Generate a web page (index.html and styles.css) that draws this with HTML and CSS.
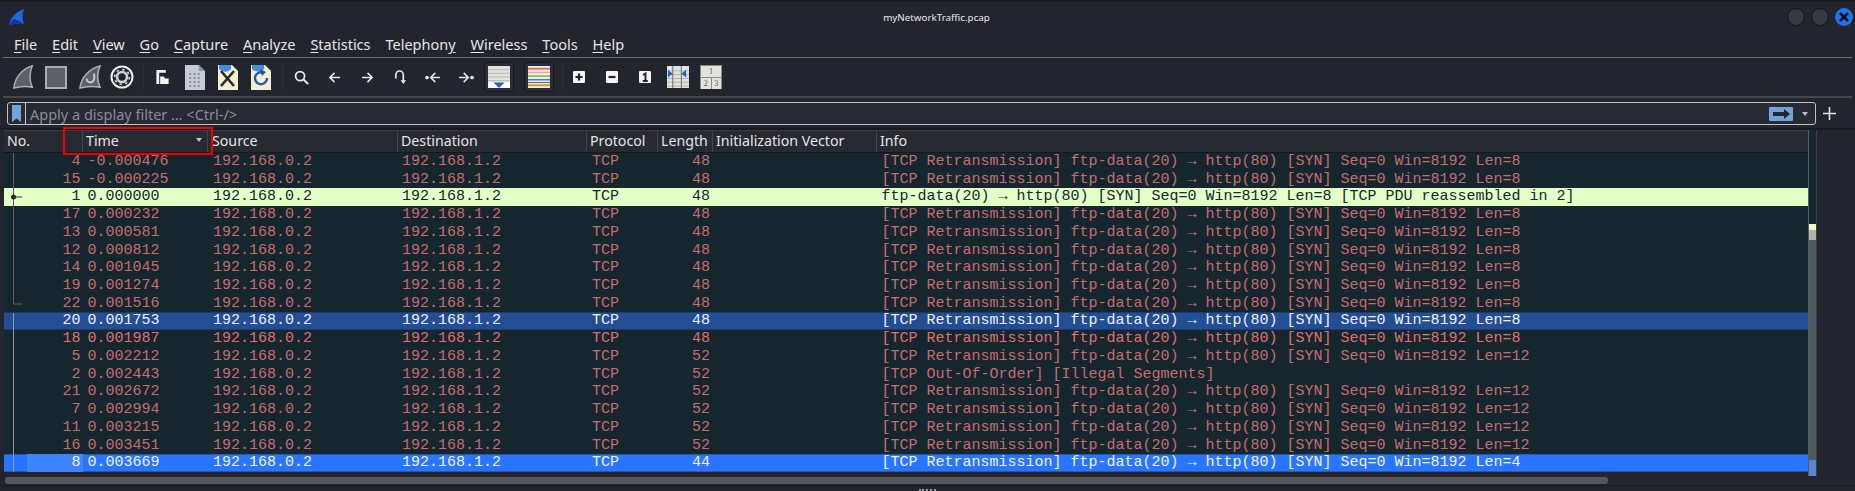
FILE: index.html
```html
<!DOCTYPE html>
<html lang="en">
<head>
    <meta charset="UTF-8">
    <meta name="viewport" content="width=device-width, initial-scale=1.0">
    <title>myNetworkTraffic.pcap</title>
    <link rel="stylesheet" href="styles.css">
</head>
<body>
    <div class="titlebar">
        <svg class="logo" width="16" height="16" viewBox="0 0 16 16"><path d="M0 16C1 9 7 3 15 0c-2 5-2 10 0 15-5-1-10 0-15 1z" fill="#1f66e0"/><path d="M0 16c1-3 3-5 5-6 4 1 7 3 10 5-5-1-10 0-15 1z" fill="#0e3c9c"/></svg>
        <div class="title">myNetworkTraffic.pcap</div>
        <div class="winbtns">
            <span class="winbtn"></span>
            <span class="winbtn"></span>
            <span class="winclose"><svg width="18" height="18" viewBox="0 0 18 18"><path d="M5 5l8 8M13 5l-8 8" stroke="#0b1220" stroke-width="2.6" fill="none"/></svg></span>
        </div>
    </div>

    <div class="menubar">
        <span><u>F</u>ile</span>
        <span><u>E</u>dit</span>
        <span><u>V</u>iew</span>
        <span><u>G</u>o</span>
        <span><u>C</u>apture</span>
        <span><u>A</u>nalyze</span>
        <span><u>S</u>tatistics</span>
        <span>Telephon<u>y</u></span>
        <span><u>W</u>ireless</span>
        <span><u>T</u>ools</span>
        <span><u>H</u>elp</span>
    </div>

    <div class="toolbar">
        <svg class="i-fin" width="22" height="25" viewBox="0 0 24 26" preserveAspectRatio="none"><path d="M2 24C3 13 11 4 22 1c-3 7-3 15 0 22-7-1-13-1-20 1z" fill="#5c6068" stroke="#a9adb4" stroke-width="1.6"/></svg>
        <svg class="i-stop" width="22" height="23" viewBox="0 0 22 23"><rect x="1" y="1" width="20" height="21" fill="#5c6068" stroke="#a9adb4" stroke-width="2"/></svg>
        <svg class="i-restart" width="24" height="25" viewBox="0 0 24 26" preserveAspectRatio="none"><path d="M2 24C3 13 11 4 22 1c-3 7-3 15 0 22-7-1-13-1-20 1z" fill="#5c6068" stroke="#a9adb4" stroke-width="1.6"/><path d="M16 9c1 5 0 9-4 9-2 0-4-2-3-4" fill="none" stroke="#c4c7cc" stroke-width="2"/></svg>
        <svg class="i-gear" width="24" height="24" viewBox="0 0 24 24"><circle cx="12" cy="12" r="10.5" fill="none" stroke="#eceded" stroke-width="2"/><circle cx="12" cy="12" r="5" fill="none" stroke="#cfd0d2" stroke-width="2.6"/><circle cx="12" cy="12" r="7.4" fill="none" stroke="#cfd0d2" stroke-width="1.6" stroke-dasharray="2.5 3.3"/></svg>
        <span class="sep s-a"></span>
        <svg class="i-open" width="15" height="16" viewBox="0 0 15 17"><path d="M1 1h10v3H4v12H1z" fill="#f4f4f4"/><path d="M5 8h4l1 2h4v6H5z" fill="#f4f4f4"/></svg>
        <svg class="i-doc" width="20" height="25" viewBox="0 0 19 25" preserveAspectRatio="none"><path d="M0 0h13l6 6v19H0z" fill="#c6ccd6"/><path d="M13 0l6 6h-6z" fill="#8f96a3"/><path d="M4 9h2M8 9h2M12 9h2M4 13h2M8 13h2M12 13h2M4 17h2M8 17h2M12 17h2M4 21h2M8 21h2M12 21h2" stroke="#8f96a3" stroke-width="2"/></svg>
        <svg class="i-close" width="20" height="25" viewBox="0 0 20 25"><path d="M0 0h14l6 6v19H0z" fill="#f3efd0"/><path d="M1 0h12v4c-3 4-9 3-12 0z" fill="#3f8ee0"/><path d="M3 6l13 15M16 6L3 21" stroke="#2a2a2a" stroke-width="2.6"/></svg>
        <svg class="i-reload" width="20" height="25" viewBox="0 0 20 25"><path d="M0 0h14l6 6v19H0z" fill="#f3efd0"/><path d="M1 0h12v4c-3 4-9 3-12 0z" fill="#3f8ee0"/><path d="M13 8a6 6 0 1 0 3 5" fill="none" stroke="#2258a8" stroke-width="2.4"/><path d="M9 4l6 3-4 4z" fill="#2258a8"/></svg>
        <span class="sep s-b"></span>
        <svg class="i-find" width="15" height="15" viewBox="0 0 16 16"><circle cx="6.5" cy="6.5" r="4.8" fill="none" stroke="#e8e8e8" stroke-width="1.9"/><path d="M10 10l5 5" stroke="#e8e8e8" stroke-width="2.2"/></svg>
        <svg class="i-back" width="13" height="13" viewBox="0 0 14 14"><path d="M13 7H2M7 2L2 7l5 5" fill="none" stroke="#e8e8e8" stroke-width="1.7"/></svg>
        <svg class="i-fwd" width="13" height="13" viewBox="0 0 14 14"><path d="M1 7h11M7 2l5 5-5 5" fill="none" stroke="#e8e8e8" stroke-width="1.7"/></svg>
        <svg class="i-goto" width="13" height="15" viewBox="0 0 14 16"><path d="M2 9V5a4 4 0 0 1 8 0v7" fill="none" stroke="#e8e8e8" stroke-width="1.8"/><path d="M7 11h6l-3 4z" fill="#e8e8e8"/></svg>
        <svg class="i-first" width="16" height="13" viewBox="0 0 17 14"><circle cx="2" cy="7" r="2" fill="#e8e8e8"/><path d="M16 7H6M11 2L6 7l5 5" fill="none" stroke="#e8e8e8" stroke-width="1.7"/></svg>
        <svg class="i-last" width="16" height="13" viewBox="0 0 17 14"><circle cx="15" cy="7" r="2" fill="#e8e8e8"/><path d="M1 7h10M6 2l5 5-5 5" fill="none" stroke="#e8e8e8" stroke-width="1.7"/></svg>
        <span class="toggle i-scroll">
            <svg width="22" height="22" viewBox="0 0 24 24"><rect width="24" height="24" fill="#e3e3de"/><path d="M0 4h24M0 8h24M0 12h24M0 16h24" stroke="#b5b5b0" stroke-width="1"/><path d="M0 21h24" stroke="#fff" stroke-width="6"/><path d="M6 18h12l-6 6z" fill="#2b5fa8"/></svg>
        </span>
        <span class="toggle i-color">
            <svg width="22" height="22" viewBox="0 0 24 24"><rect width="24" height="24" fill="#ecece8"/><path d="M0 3h24" stroke="#e8686a" stroke-width="2"/><path d="M0 7h24" stroke="#e8a0a0" stroke-width="1.5"/><path d="M0 11h24" stroke="#8cc850" stroke-width="2"/><path d="M0 15h24" stroke="#3f6fc0" stroke-width="1.5"/><path d="M0 18h24" stroke="#6a4a90" stroke-width="1"/><path d="M0 21h24" stroke="#d09a10" stroke-width="2"/></svg>
        </span>
        <span class="sep s-c"></span>
        <span class="zoombtn i-zin"><svg width="12" height="12" viewBox="0 0 12 12"><path d="M2.5 6h7M6 2.5v7" stroke="#22242c" stroke-width="2.2"/></svg></span>
        <span class="zoombtn i-zout"><svg width="12" height="12" viewBox="0 0 12 12"><path d="M2.5 6h7" stroke="#22242c" stroke-width="2.2"/></svg></span>
        <span class="zoombtn i-z1"><svg width="12" height="12" viewBox="0 0 12 12"><path d="M4 4l2.500-1.500V10M3.800 10h5" fill="none" stroke="#22242c" stroke-width="1.9"/></svg></span>
        <svg class="i-resize" width="22" height="22" viewBox="0 0 23 23"><rect width="23" height="23" fill="#e3e3de"/><path d="M0 5h23M0 9h23M0 13h23M0 17h23M0 21h23" stroke="#b5b5b0"/><path d="M6 0v23M15 0v23" stroke="#7d7d7d" stroke-width="1.2"/><path d="M1 4l5 4-5 4zM20 4l-5 4 5 4z" fill="#2b66b8"/></svg>
        <span class="i-panes">
            <span class="pane top">1</span>
            <span class="pane">2</span>
            <span class="pane">3</span>
        </span>
    </div>

    <div class="filterrow">
        <div class="filter">
            <span class="bookmark"><svg width="9" height="17" viewBox="0 0 9 17"><path d="M0 0h9v17L4.500 13.500 0 17z" fill="#6fa4dc"/></svg></span>
            <span class="placeholder">Apply a display filter … &lt;Ctrl-/&gt;</span>
            <span class="apply"><svg width="18" height="10" viewBox="0 0 18 10"><path d="M0 3h11V0l6 5-6 5V7H0z" fill="#23252e"/></svg></span>
            <span class="drop"></span>
        </div>
        <svg class="plus" width="13" height="13" viewBox="0 0 13 13"><path d="M6.500 0v13M0 6.500h13" stroke="#e4e4e4" stroke-width="1.6"/></svg>
    </div>

    <div class="listwrap">
        <div class="list">
            <div class="head">
                <div class="hc c-no">No.</div>
                <div class="hc c-time">Time<span class="sort"></span><span class="redbox"></span></div>
                <div class="hc c-src">Source</div>
                <div class="hc c-dst">Destination</div>
                <div class="hc c-proto">Protocol</div>
                <div class="hc c-len">Length</div>
                <div class="hc c-iv">Initialization Vector</div>
                <div class="hc c-info">Info</div>
            </div>
            <div class="rows">
                <div class="row"><span class="c-no">4</span><span class="c-time">-0.000476</span><span class="c-src">192.168.0.2</span><span class="c-dst">192.168.1.2</span><span class="c-proto">TCP</span><span class="c-len">48</span><span class="c-iv"></span><span class="c-info">[TCP Retransmission] ftp-data(20) → http(80) [SYN] Seq=0 Win=8192 Len=8</span></div>
                <div class="row"><span class="c-no">15</span><span class="c-time">-0.000225</span><span class="c-src">192.168.0.2</span><span class="c-dst">192.168.1.2</span><span class="c-proto">TCP</span><span class="c-len">48</span><span class="c-iv"></span><span class="c-info">[TCP Retransmission] ftp-data(20) → http(80) [SYN] Seq=0 Win=8192 Len=8</span></div>
                <div class="row first"><span class="c-no">1</span><span class="c-time">0.000000</span><span class="c-src">192.168.0.2</span><span class="c-dst">192.168.1.2</span><span class="c-proto">TCP</span><span class="c-len">48</span><span class="c-iv"></span><span class="c-info">ftp-data(20) → http(80) [SYN] Seq=0 Win=8192 Len=8 [TCP PDU reassembled in 2]</span></div>
                <div class="row"><span class="c-no">17</span><span class="c-time">0.000232</span><span class="c-src">192.168.0.2</span><span class="c-dst">192.168.1.2</span><span class="c-proto">TCP</span><span class="c-len">48</span><span class="c-iv"></span><span class="c-info">[TCP Retransmission] ftp-data(20) → http(80) [SYN] Seq=0 Win=8192 Len=8</span></div>
                <div class="row"><span class="c-no">13</span><span class="c-time">0.000581</span><span class="c-src">192.168.0.2</span><span class="c-dst">192.168.1.2</span><span class="c-proto">TCP</span><span class="c-len">48</span><span class="c-iv"></span><span class="c-info">[TCP Retransmission] ftp-data(20) → http(80) [SYN] Seq=0 Win=8192 Len=8</span></div>
                <div class="row"><span class="c-no">12</span><span class="c-time">0.000812</span><span class="c-src">192.168.0.2</span><span class="c-dst">192.168.1.2</span><span class="c-proto">TCP</span><span class="c-len">48</span><span class="c-iv"></span><span class="c-info">[TCP Retransmission] ftp-data(20) → http(80) [SYN] Seq=0 Win=8192 Len=8</span></div>
                <div class="row"><span class="c-no">14</span><span class="c-time">0.001045</span><span class="c-src">192.168.0.2</span><span class="c-dst">192.168.1.2</span><span class="c-proto">TCP</span><span class="c-len">48</span><span class="c-iv"></span><span class="c-info">[TCP Retransmission] ftp-data(20) → http(80) [SYN] Seq=0 Win=8192 Len=8</span></div>
                <div class="row"><span class="c-no">19</span><span class="c-time">0.001274</span><span class="c-src">192.168.0.2</span><span class="c-dst">192.168.1.2</span><span class="c-proto">TCP</span><span class="c-len">48</span><span class="c-iv"></span><span class="c-info">[TCP Retransmission] ftp-data(20) → http(80) [SYN] Seq=0 Win=8192 Len=8</span></div>
                <div class="row"><span class="c-no">22</span><span class="c-time">0.001516</span><span class="c-src">192.168.0.2</span><span class="c-dst">192.168.1.2</span><span class="c-proto">TCP</span><span class="c-len">48</span><span class="c-iv"></span><span class="c-info">[TCP Retransmission] ftp-data(20) → http(80) [SYN] Seq=0 Win=8192 Len=8</span></div>
                <div class="row sel-dim"><span class="c-no">20</span><span class="c-time">0.001753</span><span class="c-src">192.168.0.2</span><span class="c-dst">192.168.1.2</span><span class="c-proto">TCP</span><span class="c-len">48</span><span class="c-iv"></span><span class="c-info">[TCP Retransmission] ftp-data(20) → http(80) [SYN] Seq=0 Win=8192 Len=8</span></div>
                <div class="row bright"><span class="c-no">18</span><span class="c-time">0.001987</span><span class="c-src">192.168.0.2</span><span class="c-dst">192.168.1.2</span><span class="c-proto">TCP</span><span class="c-len">48</span><span class="c-iv"></span><span class="c-info">[TCP Retransmission] ftp-data(20) → http(80) [SYN] Seq=0 Win=8192 Len=8</span></div>
                <div class="row"><span class="c-no">5</span><span class="c-time">0.002212</span><span class="c-src">192.168.0.2</span><span class="c-dst">192.168.1.2</span><span class="c-proto">TCP</span><span class="c-len">52</span><span class="c-iv"></span><span class="c-info">[TCP Retransmission] ftp-data(20) → http(80) [SYN] Seq=0 Win=8192 Len=12</span></div>
                <div class="row"><span class="c-no">2</span><span class="c-time">0.002443</span><span class="c-src">192.168.0.2</span><span class="c-dst">192.168.1.2</span><span class="c-proto">TCP</span><span class="c-len">52</span><span class="c-iv"></span><span class="c-info">[TCP Out-Of-Order] [Illegal Segments]</span></div>
                <div class="row"><span class="c-no">21</span><span class="c-time">0.002672</span><span class="c-src">192.168.0.2</span><span class="c-dst">192.168.1.2</span><span class="c-proto">TCP</span><span class="c-len">52</span><span class="c-iv"></span><span class="c-info">[TCP Retransmission] ftp-data(20) → http(80) [SYN] Seq=0 Win=8192 Len=12</span></div>
                <div class="row"><span class="c-no">7</span><span class="c-time">0.002994</span><span class="c-src">192.168.0.2</span><span class="c-dst">192.168.1.2</span><span class="c-proto">TCP</span><span class="c-len">52</span><span class="c-iv"></span><span class="c-info">[TCP Retransmission] ftp-data(20) → http(80) [SYN] Seq=0 Win=8192 Len=12</span></div>
                <div class="row"><span class="c-no">11</span><span class="c-time">0.003215</span><span class="c-src">192.168.0.2</span><span class="c-dst">192.168.1.2</span><span class="c-proto">TCP</span><span class="c-len">52</span><span class="c-iv"></span><span class="c-info">[TCP Retransmission] ftp-data(20) → http(80) [SYN] Seq=0 Win=8192 Len=12</span></div>
                <div class="row"><span class="c-no">16</span><span class="c-time">0.003451</span><span class="c-src">192.168.0.2</span><span class="c-dst">192.168.1.2</span><span class="c-proto">TCP</span><span class="c-len">52</span><span class="c-iv"></span><span class="c-info">[TCP Retransmission] ftp-data(20) → http(80) [SYN] Seq=0 Win=8192 Len=12</span></div>
                <div class="row sel"><span class="c-no">8</span><span class="c-time">0.003669</span><span class="c-src">192.168.0.2</span><span class="c-dst">192.168.1.2</span><span class="c-proto">TCP</span><span class="c-len">44</span><span class="c-iv"></span><span class="c-info">[TCP Retransmission] ftp-data(20) → http(80) [SYN] Seq=0 Win=8192 Len=4</span></div>
                <!-- conversation line in the No. column -->
                <svg class="related" width="24" height="320" viewBox="0 0 24 320">
                    <path d="M9.500 0V42" stroke="#56666c" fill="none"/>
                    <path d="M9.500 44V151H18" stroke="#6a5a5c" fill="none"/>
                    <path d="M10 44h8" stroke="#2a2a2a" fill="none"/>
                    <circle cx="9.500" cy="44" r="2.500" fill="#1b2a2c"/>
                    <path d="M9.500 160V319" stroke="#8d9aa2" fill="none"/>
                </svg>
            </div>
        </div>
        <div class="minimap">
            <span class="mm-yellow"></span>
            <span class="mm-thumb"></span>
            <span class="mm-blue"></span>
        </div>
    </div>

    <div class="hscroll"><span class="hthumb"></span></div>
    <div class="grip"><span class="dots"></span></div>
</body>
</html>
```

FILE: styles.css
```css
* {
    box-sizing: border-box;
}
html, body {
    height: 491px;
    overflow: hidden;
}
body {
    margin: 0;
    background: #23252e;
    color: #e8e8e8;
    font-family: "Noto Sans", sans-serif;
    font-size: 14.5px;
}
svg {
    display: block;
    flex: none;
}

.titlebar {
    height: 35px;
    position: relative;
    display: flex;
    align-items: flex-start;
    padding: 6px 0 0 9px;
    border-top: 2px solid #1a1b22;
}
.logo {
    margin-top: 1px;
}
.title {
    position: absolute;
    left: 18px;
    right: 0;
    top: 9px;
    text-align: center;
    font-size: 9.8px;
    line-height: 13px;
    color: #e8e8e8;
}
.winbtns {
    margin-left: auto;
    margin-right: 2px;
    display: flex;
    gap: 6px;
}
.winbtn, .winclose {
    width: 18px;
    height: 18px;
    flex: none;
    border-radius: 50%;
}
.winbtn {
    background: #343844;
    border: 1px solid #111217;
}
.winclose {
    background: #2271f0;
}

.menubar {
    height: 23px;
    margin: 0 3px;
    display: flex;
    gap: 14.9px;
    padding-left: 11px;
    line-height: 19px;
    color: #e6e6e6;
    border-bottom: 1px solid #6c6e74;
}
.menubar u {
    text-underline-offset: 2px;
}

.toolbar {
    height: 40px;
    margin: 0 3px;
    display: flex;
    align-items: center;
    border-bottom: 2px solid #46484f;
    padding-left: 9px;
}
.sep {
    width: 1px;
    height: 26px;
    background: #2e3039;
}
.s-a { margin-left: 9px; }
.s-b { margin-left: 11px; }
.s-c { margin-left: 8px; }
.i-stop { margin-left: 11px; }
.i-restart { margin-left: 11px; }
.i-gear { margin-left: 8px; }
.i-open { margin-left: 11px; }
.i-doc { margin-left: 15px; }
.i-close { margin-left: 13px; }
.i-reload { margin-left: 13px; }
.i-find { margin-left: 11px; }
.i-back { margin-left: 19px; }
.i-fwd { margin-left: 20px; }
.i-goto { margin-left: 20px; }
.i-first { margin-left: 18px; }
.i-last { margin-left: 17px; }
.toggle {
    width: 30px;
    height: 30px;
    flex: none;
    padding: 3px;
    border: 1px solid #15161b;
    border-radius: 4px;
    background: #2a2d37;
}
.i-scroll { margin-left: 10px; }
.i-color { margin-left: 10px; }
.zoombtn {
    width: 12px;
    height: 12px;
    flex: none;
    background: #f4f4f4;
    border-radius: 1px;
}
.i-zin { margin-left: 10px; }
.i-zout { margin-left: 21px; }
.i-z1 { margin-left: 21px; }
.i-resize { margin-left: 16px; }
.i-panes {
    margin-left: 11px;
    width: 22px;
    height: 24px;
    flex: none;
    display: grid;
    grid-template-columns: 1fr 1fr;
    grid-template-rows: 1fr 1fr;
    gap: 1px;
    padding: 1px;
    background: #8a8a88;
}
.pane {
    background: #e3e3de;
    color: #555;
    font-family: "Liberation Serif", serif;
    font-size: 8px;
    line-height: 11px;
    text-align: center;
}
.pane.top {
    grid-column: 1 / 3;
}

.filterrow {
    display: flex;
    align-items: flex-start;
    height: 32px;
    padding: 4px 0 0 7px;
    border-bottom: 2px solid #191a20;
}
.filter {
    width: 1809px;
    height: 23px;
    flex: none;
    display: flex;
    align-items: center;
    border: 1px solid #c4c4c4;
    border-radius: 3px;
    background: #272934;
}
.bookmark {
    width: 18px;
    height: 21px;
    padding: 2px 0 0 4px;
    border-right: 1px solid #c4c4c4;
}
.placeholder {
    margin-left: 4px;
    color: #8a8c92;
}
.apply {
    margin-left: auto;
    width: 24px;
    height: 14px;
    padding: 2px 0 0 4px;
    background: #72a3d8;
    border-radius: 1px;
}
.drop {
    margin: 0 7px 0 9px;
    border-left: 3.5px solid transparent;
    border-right: 3.5px solid transparent;
    border-top: 4px solid #bdbdbd;
}
.plus {
    margin: 5px 0 0 7px;
}

.listwrap {
    margin-left: 4px;
    width: 1813px;
    height: 346px;
    display: flex;
    border-right: 1px solid #3c3e44;
}
.list {
    width: 1805px;
    flex: none;
    border-right: 1px solid #5a5c62;
}
.head {
    height: 23px;
    display: flex;
    background: #272a33;
    border-top: 1px solid #3b3d45;
    border-bottom: 1px solid #15171c;
    color: #e4e4e4;
    font-size: 14.2px;
}
.hc {
    position: relative;
    border-right: 1px solid #43454d;
    padding-left: 3px;
    line-height: 20px;
}
.hc.c-src { padding-left: 4px; }
.hc.c-dst { padding-left: 3px; }
.hc:last-child { border-right: none; }
.sort {
    position: absolute;
    right: 5px;
    top: 7px;
    border-left: 3.5px solid transparent;
    border-right: 3.5px solid transparent;
    border-top: 4px solid #c8c8c8;
}
/* highlight drawn over the header, must stay above the rows */
.redbox {
    position: absolute;
    z-index: 2;
    left: -20px;
    top: -4px;
    width: 150px;
    height: 28px;
    border: 2px solid #f00000;
}

.rows {
    position: relative;
}
.row {
    height: 17.72px;
    display: flex;
    background: #16262e;
    color: #c66c6e;
    font-family: "Liberation Mono", monospace;
    font-size: 15px;
    line-height: 17.72px;
    white-space: nowrap;
}
.c-no { width: 79px; flex: none; }
.c-time { width: 125px; flex: none; }
.c-src { width: 190px; flex: none; }
.c-dst { width: 189px; flex: none; }
.c-proto { width: 71px; flex: none; }
.c-len { width: 55px; flex: none; }
.c-iv { width: 164px; flex: none; }
.c-info { flex: 1; }
.row .c-no {
    text-align: right;
    padding-right: 2.5px;
}
.row .c-time { padding-left: 4.5px; }
.row .c-src { padding-left: 5px; }
.row .c-dst { padding-left: 4px; }
.row .c-proto { padding-left: 5px; }
.row .c-len {
    text-align: right;
    padding-right: 3px;
}
.row .c-info { padding-left: 4.5px; }
.first {
    background: #e4ffc7;
    color: #12272e;
}
.bright {
    color: #df7070;
}
.sel-dim {
    background: #234e96;
    color: #eef1f6;
    box-shadow: inset 0 1px #1d3a6a, inset 0 -1px #1d3a6a;
}
.sel {
    background: #2a75ff;
    color: #f0f4fb;
    box-shadow: inset 0 1px #2058b8, inset 0 -1px #2058b8;
}
.sel .c-no {
    background: linear-gradient(to right, transparent 23px, #3f84ff 23px);
}
.related {
    position: absolute;
    left: 0;
    top: 0;
}

.minimap {
    width: 7px;
    height: 346px;
    flex: none;
    background: #16262e;
    position: relative;
}
.minimap::after {
    content: "";
    position: absolute;
    left: 0;
    right: 0;
    top: 110px;
    bottom: 0;
    background: #4a5a5e;
}
.mm-yellow, .mm-thumb, .mm-blue {
    position: absolute;
    left: 0;
    right: 0;
    z-index: 1;
}
.mm-yellow {
    top: 94px;
    height: 16px;
    background: #e4ffc7;
}
.mm-thumb {
    top: 100px;
    height: 10px;
    background: #adb4a0;
}
.mm-blue {
    top: 330px;
    height: 16px;
    background: #5b85cc;
}

.hscroll {
    height: 9px;
    padding: 1px 0 0 5px;
}
.hthumb {
    display: block;
    width: 1603px;
    height: 7px;
    border-radius: 3px;
    background: #55575c;
}
.grip {
    height: 6px;
    display: flex;
    justify-content: center;
    padding-top: 3px;
    border-top: 1px solid #1b1c22;
}
.dots {
    width: 17px;
    height: 2px;
    border-top: 2px dotted #9a9a9a;
}
```
